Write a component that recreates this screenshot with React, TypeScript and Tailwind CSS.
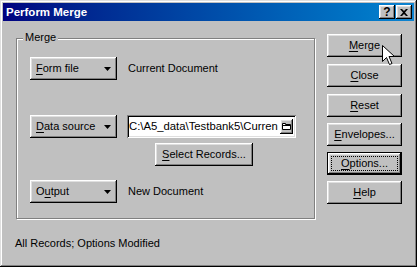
import type { ReactNode } from 'react';

const font = { fontFamily: '"Liberation Sans", Arial, sans-serif' };

const raised =
  'shadow-[inset_-1px_-1px_#000,inset_1px_1px_#fff,inset_-2px_-2px_#808080,inset_2px_2px_#dfdfdf]';

function Key({ children }: { children: ReactNode }) {
  return <span className="underline underline-offset-[2px]">{children}</span>;
}

function PushButton({ children, isDefault }: { children: ReactNode; isDefault?: boolean }) {
  if (isDefault) {
    return (
      <div className="flex h-[23px] w-[75px] items-center justify-center bg-[#c0c0c0] p-[4px] shadow-[inset_0_0_0_1px_#000,inset_-2px_-2px_#000,inset_2px_2px_#fff,inset_-3px_-3px_#808080,inset_3px_3px_#dfdfdf]">
        <div className="flex h-full w-full items-center justify-center border border-dotted border-black">
          {children}
        </div>
      </div>
    );
  }
  return (
    <div className={`flex h-[23px] w-[75px] items-center justify-center bg-[#c0c0c0] ${raised}`}>
      {children}
    </div>
  );
}

function DropButton({ children }: { children: ReactNode }) {
  return (
    <div className={`flex h-[23px] w-[87px] shrink-0 items-center justify-between bg-[#c0c0c0] pl-[6px] pr-[6px] ${raised}`}>
      <span>{children}</span>
      <svg width="7" height="4" viewBox="0 0 7 4">
        <path d="M0 0h7L3.5 4z" fill="#000" />
      </svg>
    </div>
  );
}

export default function App() {
  return (
    <div
      className="relative h-[267px] w-[417px] bg-[#c0c0c0] p-[3px] text-[11px] leading-[13px] text-black shadow-[inset_-1px_-1px_#000,inset_1px_1px_#dfdfdf,inset_-2px_-2px_#808080,inset_2px_2px_#fff]"
      style={font}
    >
      {/* title bar */}
      <div className="flex h-[18px] items-center justify-between bg-gradient-to-r from-[#000080] to-[#1084d0] pl-[3px] pr-[2px]">
        <span className="text-[11.5px] font-bold text-white">Perform Merge</span>
        <div className="flex">
          <div className={`flex h-[14px] w-[16px] items-center justify-center bg-[#c0c0c0] text-[12px] font-bold leading-none ${raised}`}>
            ?
          </div>
          <div className={`ml-[1px] flex h-[14px] w-[16px] items-center justify-center bg-[#c0c0c0] ${raised}`}>
            <svg width="8" height="7" viewBox="0 0 8 7">
              <path d="M0 0h2l2 2 2-2h2L5 3.5 8 7H6L4 5 2 7H0l3-3.5z" fill="#000" />
            </svg>
          </div>
        </div>
      </div>

      {/* body */}
      <div className="flex pl-[13px] pt-[13px]">
        <div className="flex w-[299px] flex-col pt-[4px]">
          <div className="relative h-[181px] border border-[#808080] pl-[13px] pt-[18px] shadow-[inset_1px_1px_#fff,1px_1px_#fff]">
            <span className="absolute left-[6px] top-[-8px] bg-[#c0c0c0] px-[2px]">Merge</span>

            <div className="flex items-center">
              <DropButton>
                <Key>F</Key>orm file
              </DropButton>
              <span className="ml-[11px]">Current Document</span>
            </div>

            <div className="mt-[35px] flex items-center">
              <DropButton>
                <Key>D</Key>ata source
              </DropButton>
              <div className="ml-[10px] flex h-[23px] w-[169px] items-center overflow-hidden bg-white pl-[2px] pr-[3px] shadow-[inset_1px_1px_#808080,inset_-1px_-1px_#fff,inset_2px_2px_#000,inset_-2px_-2px_#dfdfdf]">
                <span className="min-w-0 flex-1 overflow-hidden whitespace-nowrap text-[11.3px]">
                  C:\A5_data\Testbank5\Curren
                </span>
                <div className={`ml-[1px] flex h-[15px] w-[13px] shrink-0 items-center justify-center bg-[#c0c0c0] ${raised}`}>
                  <svg width="9" height="7" viewBox="0 0 9 7">
                    <path d="M0.5 0.5h3v1h5v5h-8z" fill="#fff" stroke="#000" />
                    <path d="M0.5 2.5h8" stroke="#000" />
                  </svg>
                </div>
              </div>
            </div>

            <div className="mt-[5px] flex pl-[125px]">
              <div className={`flex h-[23px] w-[98px] items-center justify-center bg-[#c0c0c0] ${raised}`}>
                <span>
                  <Key>S</Key>elect Records...
                </span>
              </div>
            </div>

            <div className="mt-[14px] flex items-center">
              <DropButton>
                O<Key>u</Key>tput
              </DropButton>
              <span className="ml-[11px]">New Document</span>
            </div>
          </div>

          <div className="mt-[18px]">
            <span className="-ml-[1px]">All Records; Options Modified</span>
          </div>
        </div>

        <div className="ml-[12px] flex flex-col">
          <PushButton>
            <span>
              <Key>M</Key>erge
            </span>
          </PushButton>
          <div className="mt-[7px]">
            <PushButton>
              <span>
                <Key>C</Key>lose
              </span>
            </PushButton>
          </div>
          <div className="mt-[7px]">
            <PushButton>
              <span>
                <Key>R</Key>eset
              </span>
            </PushButton>
          </div>
          <div className="mt-[6px]">
            <PushButton>
              <span>
                <Key>E</Key>nvelopes...
              </span>
            </PushButton>
          </div>
          <div className="mt-[6px]">
            <PushButton isDefault>
              <span>
                <Key>O</Key>ptions...
              </span>
            </PushButton>
          </div>
          <div className="mt-[6px]">
            <PushButton>
              <span>
                <Key>H</Key>elp
              </span>
            </PushButton>
          </div>
        </div>
      </div>

      {/* mouse pointer */}
      <svg className="absolute left-[382px] top-[45px]" width="13" height="21" viewBox="0 0 13 21">
        <path d="M0.5 0.5v16l4-4 3 7 2.5-1-3-7h5.5z" fill="#fff" stroke="#000" strokeLinejoin="miter" />
      </svg>
    </div>
  );
}
